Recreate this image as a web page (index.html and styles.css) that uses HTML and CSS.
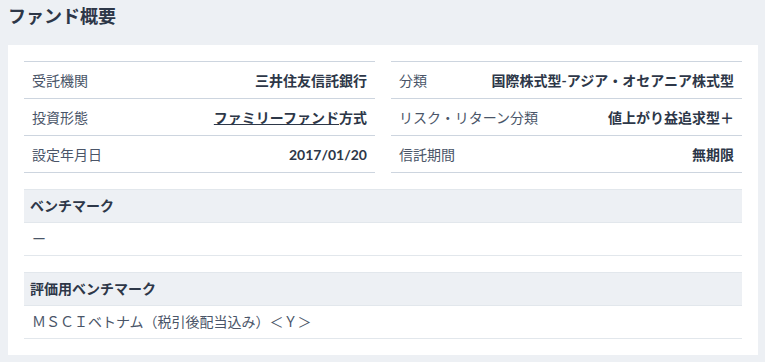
FILE: index.html
```html
<!DOCTYPE html>
<html lang="ja">
<head>
    <meta charset="UTF-8">
    <meta name="viewport" content="width=device-width, initial-scale=1.0">
    <title>ファンド概要</title>
    <link rel="stylesheet" href="styles.css">
</head>
<body>
    <div class="page">
        <h2 class="section-title">ファンド概要</h2>

        <div class="fund-card">
            <div class="info-grid">
                <dl class="info-list">
                    <div class="info-row">
                        <dt>受託機関</dt>
                        <dd>三井住友信託銀行</dd>
                    </div>
                    <div class="info-row">
                        <dt>投資形態</dt>
                        <dd><a href="#" class="fund-link">ファミリーファンド</a>方式</dd>
                    </div>
                    <div class="info-row">
                        <dt>設定年月日</dt>
                        <dd>2017/01/20</dd>
                    </div>
                </dl>

                <dl class="info-list">
                    <div class="info-row">
                        <dt>分類</dt>
                        <dd>国際株式型-アジア・オセアニア株式型</dd>
                    </div>
                    <div class="info-row">
                        <dt>リスク・リターン分類</dt>
                        <dd>値上がり益追求型＋</dd>
                    </div>
                    <div class="info-row">
                        <dt>信託期間</dt>
                        <dd>無期限</dd>
                    </div>
                </dl>
            </div>

            <div class="bench-block">
                <div class="bench-head">ベンチマーク</div>
                <div class="bench-value">ー</div>
            </div>

            <div class="bench-block">
                <div class="bench-head">評価用ベンチマーク</div>
                <div class="bench-value">ＭＳＣＩベトナム（税引後配当込み）＜Ｙ＞</div>
            </div>
        </div>
    </div>
</body>
</html>
```

FILE: styles.css
```css
/* Fund overview */
body {
    font-family: Lato, "Noto Sans CJK JP", sans-serif;
    background-color: #edf0f4;
    color: #2d3748;
    margin: 0;
    padding: 0;
}

.page {
    padding: 6px 7px 0 8px;
}

.section-title {
    font-size: 18px;
    line-height: 20px;
    font-weight: bold;
    color: #2d3748;
    margin: 0 0 19px;
}

.fund-card {
    background-color: #fff;
    padding: 16px;
    display: flex;
    flex-direction: column;
    gap: 16px;
}

.info-grid {
    display: grid;
    grid-template-columns: repeat(2, minmax(0, 1fr));
    gap: 16px;
}

.info-list {
    margin: 0;
    border-top: 1px solid #cdd5df;
    font-size: 14px;
}

.info-row {
    display: flex;
    justify-content: space-between;
    align-items: center;
    gap: 12px;
    height: 36px;
    padding: 0 8px;
    border-bottom: 1px solid #cdd5df;
    white-space: nowrap;
}

.info-row dt {
    color: #4a5568;
}

.info-row dd {
    margin: 0;
    font-weight: bold;
    color: #2d3748;
    text-align: right;
}

.fund-link {
    color: #2d3748;
    text-decoration: underline;
}

.bench-block {
    font-size: 14px;
}

.bench-head {
    height: 32px;
    line-height: 32px;
    padding: 0 6px;
    background-color: #edf0f4;
    border-top: 1px solid #e2e7ec;
    border-bottom: 1px solid #e2e7ec;
    font-weight: bold;
    color: #2d3748;
}

.bench-value {
    height: 32px;
    line-height: 32px;
    padding: 0 8px;
    border-bottom: 1px solid #e2e7ec;
    color: #4a5568;
}
```
